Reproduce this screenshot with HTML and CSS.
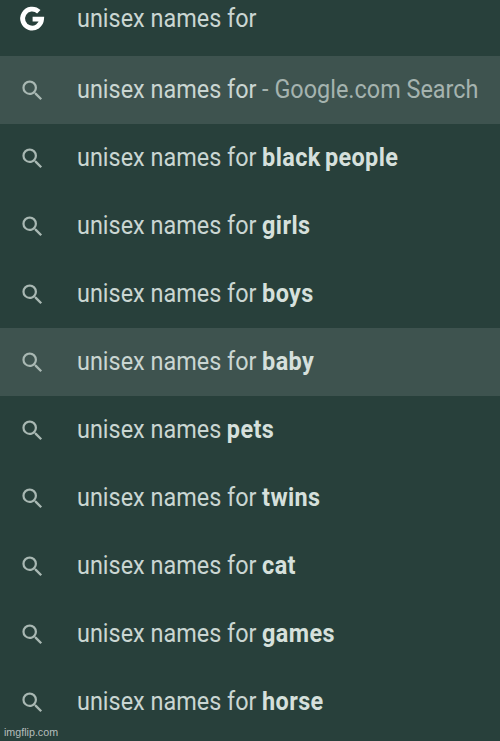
FILE: index.html
```
<!DOCTYPE html>
<html lang="en">
  <head>
    <meta charset="UTF-8" />
    <meta name="viewport" content="width=device-width, initial-scale=1.0" />
    <title>unisex names for</title>
    <link rel="stylesheet" href="styles.css">
  </head>
  <body>
    <!-- shared search icon -->
    <svg class="sprite" aria-hidden="true">
      <symbol id="search" viewBox="0 0 24 24">
        <path d="M15.5 14h-.79l-.28-.27A6.47 6.47 0 0 0 16 9.5 6.5 6.5 0 1 0 9.5 16c1.61 0 3.09-.59 4.23-1.57l.27.28v.79l5 4.99L20.49 19l-4.99-5zm-6 0C7.01 14 5 11.99 5 9.5S7.01 5 9.5 5 14 7.01 14 9.5 11.99 14 9.5 14z" />
      </symbol>
    </svg>

    <!-- address bar -->
    <div class="row omnibox">
      <svg class="google" viewBox="0 0 28 28">
        <path d="M20.8 6.8A9.5 9.5 0 1 0 23.6 14.2H14.6" />
      </svg>
      <div class="text"><span>unisex names for</span></div>
    </div>

    <!-- suggestions -->
    <div class="suggestions">
      <div class="row active">
        <svg class="icon"><use href="#search" /></svg>
        <div class="text"><span>unisex names for</span><span class="source">- Google.com Search</span></div>
      </div>
      <div class="row">
        <svg class="icon"><use href="#search" /></svg>
        <div class="text"><span>unisex names for</span><b>black people</b></div>
      </div>
      <div class="row">
        <svg class="icon"><use href="#search" /></svg>
        <div class="text"><span>unisex names for</span><b>girls</b></div>
      </div>
      <div class="row">
        <svg class="icon"><use href="#search" /></svg>
        <div class="text"><span>unisex names for</span><b>boys</b></div>
      </div>
      <div class="row active">
        <svg class="icon"><use href="#search" /></svg>
        <div class="text"><span>unisex names for</span><b>baby</b></div>
      </div>
      <div class="row">
        <svg class="icon"><use href="#search" /></svg>
        <div class="text"><span>unisex names</span><b>pets</b></div>
      </div>
      <div class="row">
        <svg class="icon"><use href="#search" /></svg>
        <div class="text"><span>unisex names for</span><b>twins</b></div>
      </div>
      <div class="row">
        <svg class="icon"><use href="#search" /></svg>
        <div class="text"><span>unisex names for</span><b>cat</b></div>
      </div>
      <div class="row">
        <svg class="icon"><use href="#search" /></svg>
        <div class="text"><span>unisex names for</span><b>games</b></div>
      </div>
      <div class="row">
        <svg class="icon"><use href="#search" /></svg>
        <div class="text"><span>unisex names for</span><b>horse</b></div>
      </div>
    </div>

    <div class="watermark">imgflip.com</div>
  </body>
</html>
```
FILE: styles.css
```
body {
  margin: 0;
  height: 741px;
  overflow: hidden;
  position: relative;
  background-color: #28403b;
  color: #cad6d2;
  font-family: Roboto, sans-serif;
  font-size: 25px;
}

.sprite {
  display: none;
}

.row {
  display: flex;
  align-items: center;
  height: 68px;
  padding-left: 18px;
}

.row.active {
  background-color: #3e534f;
}

/* address bar */
.omnibox {
  height: 38px;
  padding-bottom: 18px;
}

.google {
  flex-shrink: 0;
  width: 28px;
  height: 28px;
  margin-right: 31px;
  fill: none;
  stroke: #fff;
  stroke-width: 4.8;
}

.icon {
  flex-shrink: 0;
  width: 27px;
  height: 27px;
  margin-left: 1px;
  margin-right: 31px;
  fill: #a9b8b3;
}

.text {
  display: flex;
  gap: 6px;
  padding-bottom: 1px;
  white-space: nowrap;
  transform: scaleX(0.937);
  transform-origin: left;
}

.text b {
  color: #d6e0dc;
  letter-spacing: 0.4px;
  word-spacing: -2px;
}

.source {
  color: #a5b3af;
}

.watermark {
  position: absolute;
  left: 4px;
  bottom: 2px;
  font-family: "Liberation Sans", Arial, sans-serif;
  font-size: 10.7px;
  line-height: 13px;
  color: #b5bdbb;
}
```
